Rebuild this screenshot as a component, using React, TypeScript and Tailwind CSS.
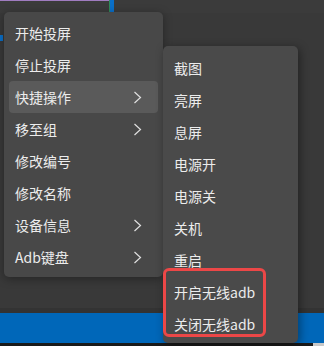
import React from "react";

const font = { fontFamily: '"Noto Sans CJK SC", "Noto Sans", sans-serif' };

function Chevron() {
  return (
    <svg width="9" height="13" viewBox="0 0 9 13" className="text-[#e0e0e0]">
      <polyline points="1.5,1 7.5,6.5 1.5,12" fill="none" stroke="currentColor" strokeWidth="1.2" />
    </svg>
  );
}

const mainItems: { label: string; sub?: boolean; active?: boolean }[] = [
  { label: "开始投屏" },
  { label: "停止投屏" },
  { label: "快捷操作", sub: true, active: true },
  { label: "移至组", sub: true },
  { label: "修改编号" },
  { label: "修改名称" },
  { label: "设备信息", sub: true },
  { label: "Adb键盘", sub: true },
];

const subItems = ["截图", "亮屏", "息屏", "电源开", "电源关", "关机", "重启", "开启无线adb", "关闭无线adb"];

export default function App() {
  return (
    <div className="relative w-[324px] h-[346px] overflow-hidden bg-[#393939]" style={font}>
      <div className="flex flex-col h-full">
        <div className="relative h-[13px] bg-[#3b3b3b] flex">
          <div className="w-[109px] h-[1px] bg-[#a07cc0]" />
          <div className="w-[1px] h-[13px] bg-[#2f8a5a]" />
          <div className="w-[4px] h-[13px] bg-[#0a6fc8]" />
        </div>
        <div className="relative flex-1 bg-[#393939]">
          <div className="absolute left-0 top-[22px] w-[3px] h-[6px] bg-[#0a6fc8]" />
        </div>
        <div className="h-[5px] bg-[#333333]" />
        <div className="h-[30px] bg-[#0067b9]" />
        <div className="h-[3px] bg-[#1a1a1a] flex justify-end">
          <div className="w-[11px] h-full bg-[#c8c8c8]" />
        </div>
      </div>

      {/* Main context menu */}
      <div className="absolute left-[4px] top-[12px] w-[159px] pt-[5px] pb-[4px] px-[5px] rounded-[5px] bg-[#484848] shadow-[0_2px_10px_rgba(0,0,0,0.35)] flex flex-col">
        {mainItems.map((it) => (
          <div
            key={it.label}
            className={`h-[32px] flex items-center justify-between pl-[6px] pr-[16px] rounded-[4px] text-[14px] text-[#ececec] ${it.active ? "bg-[#5a5a5a]" : ""}`}
          >
            <span>{it.label}</span>
            {it.sub && <Chevron />}
          </div>
        ))}
      </div>

      {/* Submenu */}
      <div className="absolute left-[163px] top-[46px] w-[135px] h-[297px] pt-[6px] px-[5px] rounded-[5px] bg-[#4a4a4a] shadow-[2px_2px_10px_rgba(0,0,0,0.4)] flex flex-col">
        {subItems.map((s) => (
          <div key={s} className="h-[32px] flex items-center pl-[6px] text-[14px] text-[#ececec]">
            {s}
          </div>
        ))}
      </div>

      {/* Red annotation box */}
      <div className="absolute left-[163px] top-[268px] w-[103px] h-[69px] border-[3px] border-[#ec4747] rounded-[6px]" />
    </div>
  );
}
